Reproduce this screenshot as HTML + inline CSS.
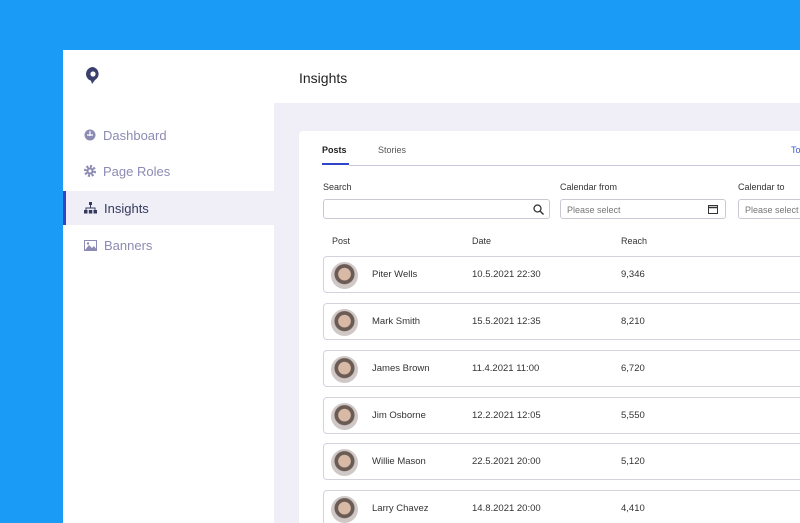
<!DOCTYPE html>
<html><head><style>
*{margin:0;padding:0;box-sizing:border-box}
html,body{width:800px;height:523px;overflow:hidden}
body{background:#1a9bf6;font-family:"Liberation Sans",sans-serif;position:relative}
.panel{position:absolute;left:63px;top:50px;width:737px;height:473px;background:#fff}
.main{position:absolute;left:274px;top:103px;width:526px;height:420px;background:#f0eff7}
.card{position:absolute;left:299px;top:131px;width:501px;height:392px;background:#fff;border-radius:4px 0 0 0}
.nav{position:absolute;left:63px;width:211px;height:34px;display:flex;align-items:center;padding-left:21px;font-size:13px;color:#8c8bb3}
.nav svg{margin-right:7px}
.abs{position:absolute}
.lbl{font-size:9px;color:#333}
.inp{position:absolute;height:20px;border:1px solid #c9c9d6;border-radius:3px;font-size:9px;color:#777;padding:5px 6px}
.row{position:absolute;left:323px;width:490px;height:37px;border:1px solid #d3d3de;border-radius:4px;font-size:9.5px;color:#333}
.row span{position:absolute;top:12px}
.av{position:absolute;left:7px;top:5px;width:27px;height:27px;border-radius:50%;background:radial-gradient(circle at 50% 45%,#d8b9a6 0 30%,#6b5b55 33% 48%,#cfc8c6 52%)}
</style></head><body>
<div class="panel"></div>
<div class="main"></div>
<div class="card"></div>
<svg class="abs" style="left:85px;top:66px" width="16" height="19" viewBox="0 0 16 19"><path d="M8 1a7 7 0 0 0-2 13.7L7 18l3-4A7 7 0 0 0 8 1z" fill="#3b3f6e"/><circle cx="8" cy="8" r="2.6" fill="#fff"/></svg>
<div class="abs" style="left:299px;top:70px;font-size:14px;color:#222">Insights</div>
<div class="nav" style="top:118px"><svg width="12" height="12"><circle cx="6" cy="6" r="5.5" fill="#8c8bb3"/><path d="M6 2v5M3 6h6" stroke="#fff" stroke-width="1.2"/></svg>Dashboard</div>
<div class="nav" style="top:154px"><svg width="12" height="12"><circle cx="6" cy="6" r="4.5" fill="none" stroke="#8c8bb3" stroke-width="3" stroke-dasharray="2 1.5"/><circle cx="6" cy="6" r="3.5" fill="#8c8bb3"/><circle cx="6" cy="6" r="1.5" fill="#fff"/></svg>Page Roles</div>
<div class="nav" style="top:191px;background:#f0eff7;color:#333a5e;border-left:3px solid #2f47c6;padding-left:18px"><svg width="13" height="12"><rect x="5" y="0" width="3" height="3" fill="#333a5e"/><path d="M6.5 3v3M2 8V6h9v2" stroke="#333a5e" fill="none"/><rect x="0" y="8" width="3.5" height="3.5" fill="#333a5e"/><rect x="4.8" y="8" width="3.5" height="3.5" fill="#333a5e"/><rect x="9.5" y="8" width="3.5" height="3.5" fill="#333a5e"/></svg>Insights</div>
<div class="nav" style="top:228px"><svg width="13" height="11"><rect x=".5" y=".5" width="12" height="10" fill="none" stroke="#8c8bb3"/><path d="M1 10l4-5 3 3 2-2 3 4z" fill="#8c8bb3"/><circle cx="4" cy="3.5" r="1.2" fill="#8c8bb3"/></svg>Banners</div>
<div class="abs" style="left:322px;top:145px;font-size:9px;font-weight:bold;color:#222">Posts</div>
<div class="abs" style="left:322px;top:163px;width:27px;height:2px;background:#2f47c6"></div>
<div class="abs" style="left:349px;top:165px;width:451px;height:1px;background:#c8c8e0"></div>
<div class="abs" style="left:378px;top:145px;font-size:9px;color:#555">Stories</div>
<div class="abs" style="left:791px;top:145px;font-size:9px;color:#3b5bd8">To</div>
<div class="abs lbl" style="left:323px;top:182px">Search</div>
<div class="abs lbl" style="left:560px;top:182px">Calendar from</div>
<div class="abs lbl" style="left:738px;top:182px">Calendar to</div>
<div class="inp" style="left:323px;top:199px;width:227px"><svg class="abs" style="right:5px;top:4px" width="11" height="11"><circle cx="4.5" cy="4.5" r="3.5" fill="none" stroke="#333" stroke-width="1.3"/><path d="M7 7l3.5 3.5" stroke="#333" stroke-width="1.4"/></svg></div>
<div class="inp" style="left:560px;top:199px;width:166px">Please select<svg class="abs" style="right:7px;top:4px" width="10" height="10"><rect x=".5" y="1.5" width="9" height="8" fill="none" stroke="#333"/><path d="M.5 3.5h9" stroke="#333" stroke-width="1.5"/></svg></div>
<div class="inp" style="left:738px;top:199px;width:80px">Please select</div>
<div class="abs lbl" style="left:332px;top:236px">Post</div>
<div class="abs lbl" style="left:472px;top:236px">Date</div>
<div class="abs lbl" style="left:621px;top:236px">Reach</div>
<div class="row" style="top:256px"><div class="av"></div><span style="left:48px">Piter Wells</span><span style="left:148px">10.5.2021 22:30</span><span style="left:297px">9,346</span></div>
<div class="row" style="top:303px"><div class="av"></div><span style="left:48px">Mark Smith</span><span style="left:148px">15.5.2021 12:35</span><span style="left:297px">8,210</span></div>
<div class="row" style="top:350px"><div class="av"></div><span style="left:48px">James Brown</span><span style="left:148px">11.4.2021 11:00</span><span style="left:297px">6,720</span></div>
<div class="row" style="top:397px"><div class="av"></div><span style="left:48px">Jim Osborne</span><span style="left:148px">12.2.2021 12:05</span><span style="left:297px">5,550</span></div>
<div class="row" style="top:443px"><div class="av"></div><span style="left:48px">Willie Mason</span><span style="left:148px">22.5.2021 20:00</span><span style="left:297px">5,120</span></div>
<div class="row" style="top:490px"><div class="av"></div><span style="left:48px">Larry Chavez</span><span style="left:148px">14.8.2021 20:00</span><span style="left:297px">4,410</span></div>
</body></html>
